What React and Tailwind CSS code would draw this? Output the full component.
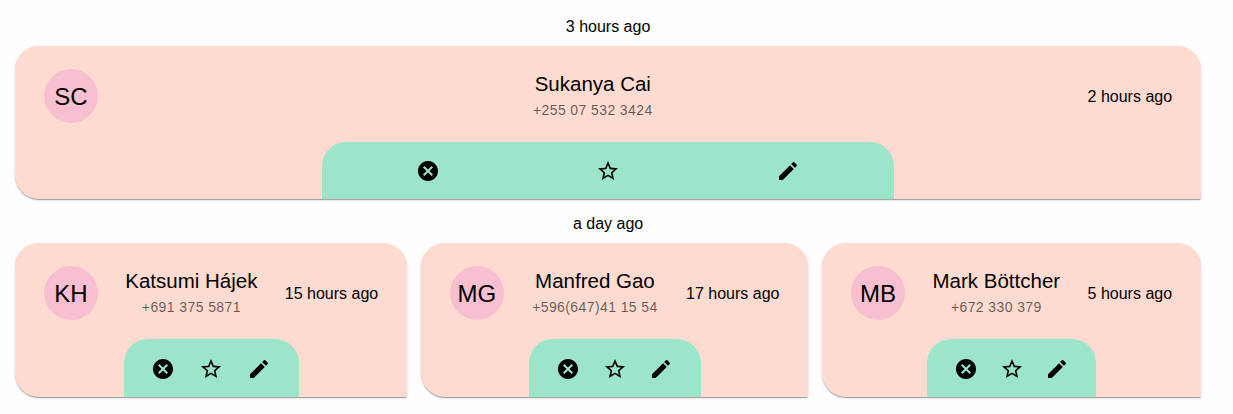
import { MdCancel, MdEdit, MdStarBorder } from "react-icons/md";

const ACTIONS = [
  { label: "Remove", Icon: MdCancel },
  { label: "Favourite", Icon: MdStarBorder },
  { label: "Edit", Icon: MdEdit },
];

function ContactCard({ initials, name, phone, time, width, actionsWidth, height }) {
  return (
    <article
      className={`${width} ${height} flex shrink-0 flex-col items-center justify-between rounded-3xl rounded-br-none bg-[#fedbd0] px-[28.6px] pt-[22px] shadow-[0_2px_1px_-1px_rgba(0,0,0,0.2),0_1px_1px_0_rgba(0,0,0,0.14),0_1px_3px_0_rgba(0,0,0,0.12)]`}
    >
      <div className="flex w-full items-center justify-between">
        <div className="flex size-[54px] items-center justify-center rounded-full bg-[#f8bfd0] pt-0.5 text-2xl leading-6">
          {initials}
        </div>
        <div className="flex flex-col items-center whitespace-nowrap pb-1">
          <h2 className="text-[20.5px] leading-8">{name}</h2>
          <p className="text-sm leading-5 tracking-[0.4px] text-black/60">{phone}</p>
        </div>
        <time className="whitespace-nowrap pt-0.5 text-base">{time}</time>
      </div>
      <div className={`${actionsWidth} grid grid-cols-3 items-center justify-items-center rounded-t-3xl bg-[#9ce5cb] px-4`}>
        {ACTIONS.map(({ label, Icon }) => (
          <button key={label} aria-label={label} type="button">
            <Icon className="size-6" />
          </button>
        ))}
      </div>
    </article>
  );
}

export default function App() {
  return (
    <main className="h-[414px] w-[1233px] overflow-hidden bg-[#fefefe] pl-[15.4px] pt-[15px] font-['Liberation_Sans',Arial,sans-serif] text-black">
      <section className="w-[1185.3px]">
        <h1 className="h-[31px] text-center text-base leading-6">3 hours ago</h1>
        <ContactCard
          initials="SC"
          name="Sukanya Cai"
          phone="+255 07 532 3424"
          time="2 hours ago"
          width="w-[1185.3px]"
          height="h-[153px]"
          actionsWidth="h-[57px] w-[572px]"
        />
      </section>
      <section className="w-[1185.3px] pt-[13px]">
        <h1 className="h-[31px] text-center text-base leading-6">a day ago</h1>
        <div className="flex justify-between">
          <ContactCard
            initials="KH"
            name="Katsumi Hájek"
            phone="+691 375 5871"
            time="15 hours ago"
            width="w-[391.4px]"
            height="h-[154px]"
            actionsWidth="h-[58px] w-[175px] pt-0.5"
          />
          <ContactCard
            initials="MG"
            name="Manfred Gao"
            phone="+596(647)41 15 54"
            time="17 hours ago"
            width="w-[386.8px]"
            height="h-[154px]"
            actionsWidth="h-[58px] w-[172px] pt-0.5"
          />
          <ContactCard
            initials="MB"
            name="Mark Böttcher"
            phone="+672 330 379"
            time="5 hours ago"
            width="w-[378.2px]"
            height="h-[154px]"
            actionsWidth="h-[58px] w-[169px] pt-0.5"
          />
        </div>
      </section>
    </main>
  );
}
